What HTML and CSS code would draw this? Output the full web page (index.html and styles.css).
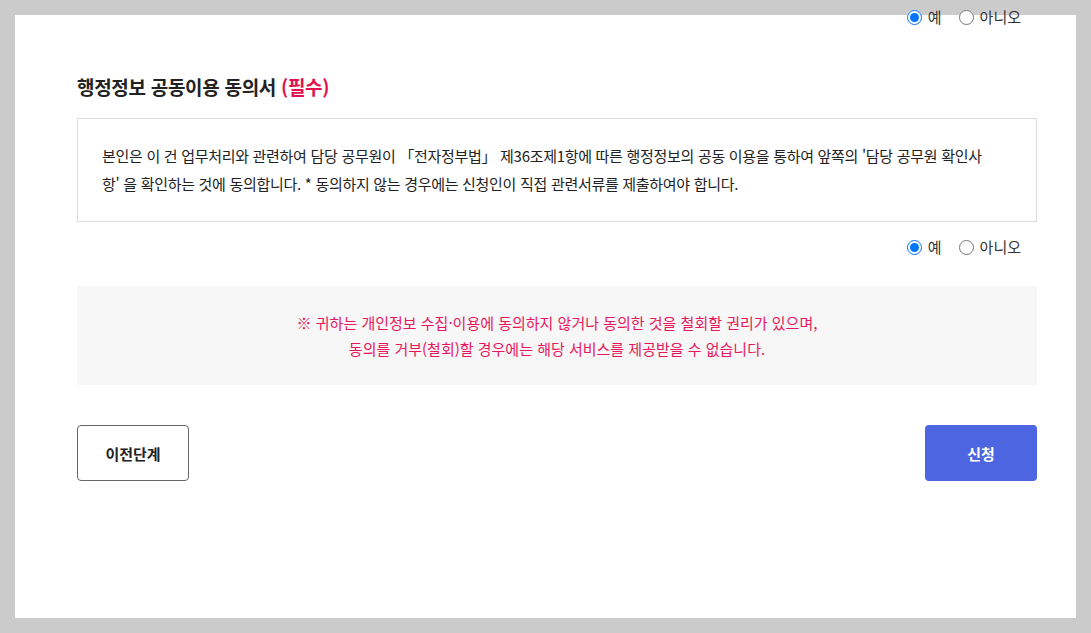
FILE: index.html
```html
<!DOCTYPE html>
<html lang="ko">
  <head>
    <meta charset="UTF-8" />
    <meta name="viewport" content="width=device-width, initial-scale=1.0" />
    <title>행정정보 공동이용 동의서</title>
    <link rel="stylesheet" href="styles.css">
  </head>
  <body>
    <div class="panel">
      <div class="radio-group radio-group-top">
        <label><input type="radio" name="agree_prev" checked /> 예</label>
        <label><input type="radio" name="agree_prev" /> 아니오</label>
      </div>

      <h2 class="section-title">행정정보 공동이용 동의서 <span class="required">(필수)</span></h2>
      <div class="consent-box">
        본인은 이 건 업무처리와 관련하여 담당 공무원이 「전자정부법」 제36조제1항에 따른 행정정보의 공동 이용을 통하여 앞쪽의 '담당 공무원 확인사항' 을 확인하는 것에 동의합니다. * 동의하지 않는 경우에는 신청인이 직접 관련서류를 제출하여야 합니다.
      </div>
      <div class="radio-group">
        <label><input type="radio" name="agree_admin" checked /> 예</label>
        <label><input type="radio" name="agree_admin" /> 아니오</label>
      </div>

      <div class="notice">
        ※ 귀하는 개인정보 수집·이용에 동의하지 않거나 동의한 것을 철회할 권리가 있으며,<br />
        동의를 거부(철회)할 경우에는 해당 서비스를 제공받을 수 없습니다.
      </div>

      <div class="button-container">
        <button type="button" class="previous-button">이전단계</button>
        <button type="button" class="submit-button">신청</button>
      </div>
    </div>
  </body>
</html>
```

FILE: styles.css
```css
body {
  margin: 0;
  background-color: #cbcbcb;
  font-family: "Noto Sans CJK KR", "Noto Sans", sans-serif;
  color: #222;
}
.panel {
  display: flow-root;
  margin: 15px;
  height: 603px;
  box-sizing: border-box;
  padding: 0 39px 0 62px;
  background: white;
}
.radio-group {
  display: flex;
  justify-content: flex-end;
  gap: 17px;
  padding-right: 16px;
  margin-top: 14px;
  font-size: 15px;
  line-height: 22px;
  color: #333;
}
.radio-group-top {
  margin-top: -9px;
}
.radio-group label {
  display: flex;
  align-items: center;
  gap: 6px;
}
.radio-group input {
  width: 15px;
  height: 15px;
  margin: 0;
  accent-color: #0075ff;
}
.section-title {
  margin: 46px 0 18px;
  font-size: 19px;
  line-height: 26px;
  font-weight: bold;
  letter-spacing: -0.3px;
  color: #222;
}
.required {
  color: #e0124f;
}
.consent-box {
  border: 1px solid #dcdcdc;
  padding: 23px 46px 23px 24px;
  font-size: 15px;
  line-height: 28px;
  letter-spacing: -0.3px;
  color: #222;
  word-break: break-all;
}
.notice {
  margin-top: 28px;
  padding: 24px 24px 23px;
  background-color: #f7f7f7;
  text-align: center;
  font-size: 15px;
  line-height: 26px;
  color: #e8175d;
}
.button-container {
  display: flex;
  justify-content: space-between;
  margin-top: 40px;
}
button {
  width: 112px;
  height: 56px;
  font-family: inherit;
  font-size: 15px;
  font-weight: bold;
  border-radius: 4px;
  cursor: pointer;
}
.previous-button {
  background: white;
  border: 1px solid #666;
  color: #222;
}
.submit-button {
  background-color: #4d65e0;
  border: none;
  color: white;
}
```
